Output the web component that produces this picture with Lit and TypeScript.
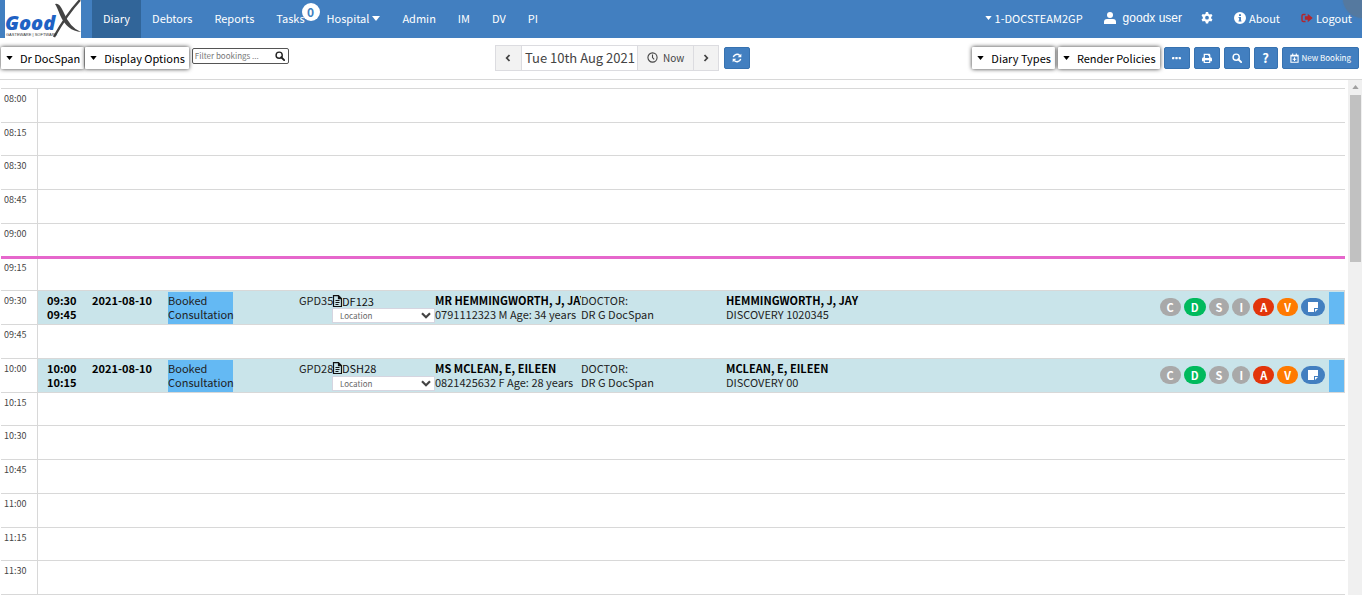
import { LitElement, html, css, svg, nothing } from "lit";
import { customElement, property } from "lit/decorators.js";

const icons: Record<string, { box: string; body: unknown }> = {
  caret: { box: "0 0 8 5", body: svg`<path d="M0 0h8L4 5z"/>` },
  user: { box: "0 0 12 12", body: svg`<circle cx="6" cy="3" r="3"/><path d="M0 12V10Q0 7 3 7h6q3 0 3 3v2z"/>` },
  gear: {
    box: "0 0 16 16",
    body: svg`<path fill-rule="evenodd" d="M6.500 0h3l.5 2.300 1.600.9 2.200-.7 1.500 2.600L13.600 6.700v1.800l1.700 1.600-1.500 2.600-2.200-.7-1.600.9-.5 2.300h-3L6 12.900l-1.600-.9-2.200.7L.7 10.100l1.700-1.600V6.700L.7 5.100l1.500-2.600 2.200.7L6 2.300zM8 5.100a2.500 2.500 0 100 5 2.500 2.500 0 000-5z"/>`,
  },
  info: {
    box: "0 0 12 12",
    body: svg`<path fill-rule="evenodd" d="M6 0a6 6 0 110 12A6 6 0 016 0zM5 2.200v1.700h2V2.200zM4.500 5v1h.6v2.500h-.6v1h3v-1H7V5z"/>`,
  },
  logout: {
    box: "0 0 16 14",
    body: svg`<path d="M6 1v2H3q-1 0-1 1v6q0 1 1 1h3v2H3q-3 0-3-3V4q0-3 3-3zM9 1l7 6-7 6V9.500H5v-5h4z"/>`,
  },
  search: {
    box: "0 0 12 12",
    body: svg`<circle cx="5" cy="5" r="3.700" fill="none" stroke="currentColor" stroke-width="1.700"/><path d="M7.500 7.500l3.500 3.500" stroke="currentColor" stroke-width="2.200" stroke-linecap="round"/>`,
  },
  left: { box: "0 0 6 8", body: svg`<path d="M4.500 1L1.700 4l2.800 3" fill="none" stroke="currentColor" stroke-width="1.800"/>` },
  right: { box: "0 0 6 8", body: svg`<path d="M1.500 1l2.800 3-2.800 3" fill="none" stroke="currentColor" stroke-width="1.800"/>` },
  clock: {
    box: "0 0 12 12",
    body: svg`<circle cx="6" cy="6" r="5" fill="none" stroke="currentColor" stroke-width="1.200"/><path d="M6 2.800V6l1.800 2" fill="none" stroke="currentColor" stroke-width="1.200"/>`,
  },
  refresh: {
    box: "0 0 12 12",
    body: svg`<path d="M1.600 5a4.500 4.500 0 017.700-2M10.400 7a4.500 4.500 0 01-7.700 2" fill="none" stroke="currentColor" stroke-width="1.800"/><path d="M11.200.8v4.400H6.800zM.8 11.200V6.800h4.400z"/>`,
  },
  dots: { box: "0 0 10 4", body: svg`<rect y="1" width="2.600" height="2.400" rx=".5"/><rect x="3.700" y="1" width="2.600" height="2.400" rx=".5"/><rect x="7.400" y="1" width="2.600" height="2.400" rx=".5"/>` },
  print: {
    box: "0 0 12 12",
    body: svg`<path fill-rule="evenodd" d="M2 1h7l1 1v3q2 0 2 2v3h-2v2H2v-2H0V7q0-2 2-2zM3.500 2.300V6h5V3.500H7.500V2.300zM3.500 8.800v1.900h5V8.800z"/>`,
  },
  calendar: {
    box: "0 0 10 11",
    body: svg`<path d="M1 2.500h8v7.800H1zM1 3.300h8M3 .5v2M7 .5v2M5 4.800v4M3 6.800h4" fill="none" stroke="currentColor" stroke-width="1.200"/>`,
  },
  file: {
    box: "0 0 10 12",
    body: svg`<path d="M1.500.6h5l3 3v7.900h-8zM6.500.6v3h3M3.500 5.500h4M3.500 7.500h4M3.500 9.500h3" fill="none" stroke="currentColor" stroke-width="1.200"/>`,
  },
  chevron: { box: "0 0 10 7", body: svg`<path d="M1 1.200l4 4 4-4" fill="none" stroke="currentColor" stroke-width="2.200"/>` },
  note: { box: "0 0 10 10", body: svg`<path d="M0 0h10v6H6v4H0z"/><path d="M7 7h3L7 10z"/>` },
};

const icon = (name: string, width: number, height: number) =>
  html`<svg width=${width} height=${height} viewBox=${icons[name].box} fill="currentColor" aria-hidden="true">${icons[name].body}</svg>`;

const base = css`
  * { box-sizing: border-box; }
  svg { display: block; flex: none; }
  button, input, select { font: inherit; color: inherit; margin: 0; }
  button { cursor: pointer; }
`;

interface Booking {
  start: string; end: string; date: string; debtor: string; file: string;
  patient: string; contact: string; scheme: string; member: string;
}

const bookings: Booking[] = [
  { start: "09:30", end: "09:45", date: "2021-08-10", debtor: "GPD35", file: "DF123", patient: "MR HEMMINGWORTH, J, JAY", contact: "0791112323 M Age: 34 years", member: "HEMMINGWORTH, J, JAY", scheme: "DISCOVERY 1020345" },
  { start: "10:00", end: "10:15", date: "2021-08-10", debtor: "GPD28", file: "DSH28", patient: "MS MCLEAN, E, EILEEN", contact: "0821425632 F Age: 28 years", member: "MCLEAN, E, EILEEN", scheme: "DISCOVERY 00" },
];

const slots = ["08:00", "08:15", "08:30", "08:45", "09:00", "09:15", "09:30", "09:45", "10:00", "10:15", "10:30", "10:45", "11:00", "11:15", "11:30"];

@customElement("nav-bar")
class NavBar extends LitElement {
  static styles = [base, css`
    :host { display: flex; position: relative; overflow: hidden; height: 38px; background: #427fc0; color: #fff; font-size: 11px; line-height: 36px; }
    a { color: inherit; text-decoration: none; white-space: nowrap; display: flex; align-items: center; }
    .logo { width: 76px; margin: 0 11px 0 5px; background: #fff; }
    .menu { display: flex; flex: 1; }
    .menu a { padding: 0 11px 2px; gap: 3px; position: relative; }
    .menu .active { background: #316599; }
    .count { position: absolute; right: -4px; top: 3px; width: 18px; height: 18px; border-radius: 9px; background: #fff; color: #427fc0; font-size: 12px; line-height: 18px; font-weight: 700; text-align: center; }
    .account { display: flex; gap: 21px; padding: 0 10px 2px 0; }
    .account a { gap: 3px; }
    .account .user { gap: 7px; font-size: 12px; font-family: "Liberation Sans", Arial, sans-serif; }
    .account .settings { margin-left: -2px; }
    .exit { color: #b3262d; }
    .bubble { position: absolute; right: -21px; top: -22px; width: 40px; height: 40px; border-radius: 20px; background: #55799f; box-shadow: 0 0 2px #55799f; }
  `];
  render() {
    return html`
      <a class="logo" href="#" aria-label="GoodX">
        <svg width="76" height="38" viewBox="0 0 76 38">
          <path d="M75 0Q62 14 49 37" fill="none" stroke="#444" stroke-width="2.400"/>
          <path d="M50 4q4-2 8 7 7 17 18 21-14-1-21-17-3-8-5-11z" fill="#444"/>
          <text x="0" y="30" font-family="Open Sans, Liberation Sans, sans-serif" font-size="20" font-weight="800" font-style="italic" fill="#1f62c4">Good</text>
          <text x="1" y="36" font-family="Liberation Sans, sans-serif" font-size="4" fill="#333">GASTEWARE | SOFTWARE</text>
        </svg>
      </a>
      <nav class="menu">
        <a class="active" href="#">Diary</a><a href="#">Debtors</a><a href="#">Reports</a>
        <a href="#">Tasks<span class="count">0</span></a>
        <a href="#">Hospital ${icon("caret", 8, 5)}</a>
        <a href="#">Admin</a><a href="#">IM</a><a href="#">DV</a><a href="#">PI</a>
      </nav>
      <div class="account">
        <a href="#">${icon("caret", 7, 4)}1-DOCSTEAM2GP</a>
        <a class="user" href="#">${icon("user", 12, 12)}goodx user</a>
        <a class="settings" href="#" aria-label="Settings">${icon("gear", 12, 12)}</a>
        <a href="#">${icon("info", 12, 12)}About</a>
        <a href="#"><span class="exit">${icon("logout", 12, 10)}</span>Logout</a>
      </div>
      <span class="bubble"></span>`;
  }
}

@customElement("tool-bar")
class ToolBar extends LitElement {
  static styles = [base, css`
    :host { display: flex; justify-content: space-between; align-items: center; height: 42px; padding: 0 3px 2px 1px; border-bottom: 1px solid #d8d8d8; font-size: 11px; line-height: 22px; }
    .group { display: flex; align-items: center; gap: 2px; }
    .actions { gap: 4px; }
    .drop { display: flex; align-items: center; gap: 7px; height: 22px; padding: 1px 4px 0 5px; border: 0; border-radius: 1px; background: #fff; color: #000; box-shadow: 0 0 4px #333; white-space: nowrap; }
    .drop + .drop { margin-left: -1px; }
    .filter { display: flex; align-items: center; width: 97px; height: 16px; margin: 0 0 3px 1px; padding: 0 3px 0 2px; border: 1px solid #555; border-radius: 2px; color: #222; }
    .filter input { flex: 1; min-width: 0; height: 14px; padding: 0; border: 0; outline: 0; background: none; font-size: 8px; }
    .filter input::placeholder { color: #777; opacity: 1; }
    .center { gap: 5px; margin-right: 16px; }
    .pager { display: flex; height: 26px; border: 1px solid #dcdce0; color: #333; }
    .pager button { display: flex; align-items: center; justify-content: center; gap: 5px; min-width: 25px; padding: 0 9px; border: 0; background: #f2f2f2; font-size: 10px; color: #444; }
    .pager .date { padding: 0 2px 0 3px; border: solid #dcdce0; border-width: 0 1px; background: #fff; font-size: 13px; white-space: nowrap; }
    .pager .next { border-left: 1px solid #dcdce0; }
    .blue { display: flex; align-items: center; justify-content: center; gap: 3px; min-width: 26px; height: 22px; padding: 0 7px; border: 1px solid #3772b0; border-radius: 2px; background: #427fc0; color: #fff; white-space: nowrap; }
    .help { min-width: 24px; font-weight: 700; font-size: 13px; }
    .new { font-size: 8px; }
  `];
  drop(label: string) {
    return html`<button class="drop" type="button">${icon("caret", 7, 4)}${label}</button>`;
  }
  render() {
    return html`
      <div class="group">
        ${this.drop("Dr DocSpan")}${this.drop("Display Options")}
        <label class="filter"><input type="text" placeholder="Filter bookings ..." aria-label="Filter bookings" />${icon("search", 10, 10)}</label>
      </div>
      <div class="group center">
        <div class="pager">
          <button type="button" aria-label="Previous day">${icon("left", 6, 8)}</button>
          <button class="date" type="button">Tue 10th Aug 2021</button>
          <button type="button">${icon("clock", 11, 11)}Now</button>
          <button class="next" type="button" aria-label="Next day">${icon("right", 6, 8)}</button>
        </div>
        <button class="blue" type="button" aria-label="Refresh">${icon("refresh", 10, 10)}</button>
      </div>
      <div class="group actions">
        ${this.drop("Diary Types")}${this.drop("Render Policies")}
        <button class="blue" type="button" aria-label="More">${icon("dots", 9, 4)}</button>
        <button class="blue" type="button" aria-label="Print">${icon("print", 10, 10)}</button>
        <button class="blue" type="button" aria-label="Search">${icon("search", 10, 10)}</button>
        <button class="blue help" type="button" aria-label="Help">?</button>
        <button class="blue new" type="button">${icon("calendar", 9, 10)}New Booking</button>
      </div>`;
  }
}

@customElement("booking-row")
class BookingRow extends LitElement {
  @property({ attribute: false }) booking!: Booking;
  static styles = [base, css`
    :host { display: grid; grid-template-columns: 45px 76px 65px 66px 33px 103px 146px 145px 1fr auto 15px; flex: 1; min-width: 0; padding: 1px 0 0 9px; border-right: 1px solid #d8d8d8; background: #c9e4ea; font-size: 11px; line-height: 14px; color: #222; white-space: nowrap; }
    .cell { min-width: 0; padding-top: 1px; }
    .strong { font-weight: 700; color: #000; }
    .clip { overflow: hidden; }
    .state { background: #64b9f3; }
    .debtor { grid-column: 5; }
    .file { display: flex; align-items: center; height: 15px; color: #111; }
    .place { display: flex; align-items: center; position: relative; height: 15px; background: #fff; border: 1px solid #d5d5e0; color: #444; }
    .place select { appearance: none; width: 100%; height: 13px; padding: 0 7px; border: 0; background: none; font-size: 8px; line-height: 13px; color: #666; }
    .place svg { position: absolute; right: 3px; pointer-events: none; }
    .badges { display: flex; align-items: center; gap: 3px; padding: 0 4px 2px 0; }
    .badge { height: 18px; padding: 0 7px; border: 0; border-radius: 9px; background: #a9a9a9; color: #fff; font-size: 11px; font-weight: 700; line-height: 18px; display: flex; align-items: center; }
    .green { background: #00ba5d; }
    .red { background: #e2350b; }
    .orange { background: #ff7a00; }
    .blue { background: #427fc0; }
    .bar { background: #64b9f3; }
  `];
  render() {
    const b = this.booking;
    const badges = [["C", ""], ["D", "green"], ["S", ""], ["I", ""], ["A", "red"], ["V", "orange"]];
    return html`
      <div class="cell strong">${b.start}<br />${b.end}</div>
      <div class="cell strong">${b.date}</div>
      <div class="cell state">Booked<br />Consultation</div>
      <div class="cell debtor">${b.debtor}</div>
      <div class="cell">
        <div class="file">${icon("file", 10, 12)}${b.file}</div>
        <div class="place"><select aria-label="Location"><option>Location</option></select>${icon("chevron", 10, 7)}</div>
      </div>
      <div class="cell clip"><span class="strong">${b.patient}</span><br />${b.contact}</div>
      <div class="cell">DOCTOR:<br />DR G DocSpan</div>
      <div class="cell"><span class="strong">${b.member}</span><br />${b.scheme}</div>
      <div class="badges">
        ${badges.map(([t, c]) => html`<button type="button" class="badge ${c}">${t}</button>`)}
        <button type="button" class="badge blue" aria-label="Notes">${icon("note", 10, 10)}</button>
      </div>
      <div class="bar"></div>`;
  }
}

@customElement("app-root")
class AppRoot extends LitElement {
  static styles = [base, css`
    :host { display: flex; flex-direction: column; min-height: 100vh; background: #fff; font-family: "Noto Sans CJK SC", "Noto Sans CJK JP", sans-serif; }
    .main { display: flex; flex: 1; gap: 3px; }
    .diary { flex: 1; min-width: 0; display: grid; grid-auto-rows: 1fr; margin: 8px 0 0 1px; border-bottom: 1px solid #d8d8d8; }
    .slot { position: relative; display: flex; min-height: 33px; border-top: 1px solid #d8d8d8; }
    .time { width: 37px; padding: 3px 0 0 3px; border-right: 1px solid #d8d8d8; font-size: 9px; line-height: 13px; color: #444; }
    .now { position: absolute; left: 0; right: 0; top: -2px; height: 3px; background: #e667cc; }
    .scroll { display: flex; flex-direction: column; align-items: center; width: 14px; background: #f0f0f0; color: #a0a0a0; }
    .arrow { display: grid; place-items: center; height: 15px; transform: rotate(180deg); }
    .thumb { width: 11px; height: 167px; background: #c1c1c1; }
  `];
  render() {
    return html`
      <nav-bar></nav-bar>
      <tool-bar></tool-bar>
      <div class="main">
        <div class="diary">
          ${slots.map((t) => {
            const b = bookings.find((x) => x.start === t);
            return html`<div class="slot">
              <div class="time">${t}</div>
              ${b ? html`<booking-row .booking=${b}></booking-row>` : nothing}
              ${t === "09:15" ? html`<span class="now"></span>` : nothing}
            </div>`;
          })}
        </div>
        <div class="scroll" aria-hidden="true"><span class="arrow">${icon("caret", 7, 4)}</span><div class="thumb"></div></div>
      </div>`;
  }
}
